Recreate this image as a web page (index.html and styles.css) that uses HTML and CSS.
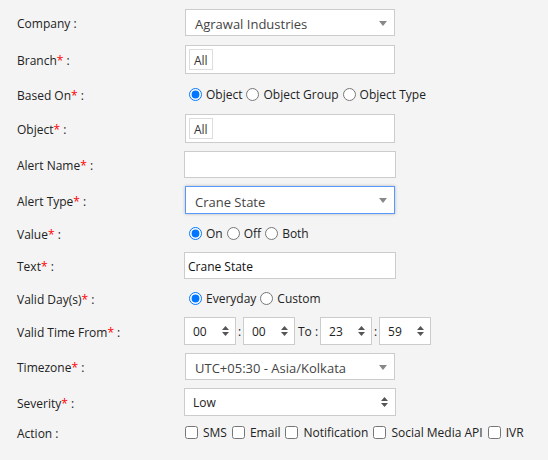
FILE: index.html
```html
<!DOCTYPE html>
<html>
<head>
<meta charset="utf-8">
<link rel="stylesheet" href="styles.css">
</head>
<body>
<div class="form">
  <div class="row r-company">
    <div class="lbl">Company :</div>
    <div class="sel"><span class="val">Agrawal Industries</span><svg class="caret" width="8" height="5" viewBox="0 0 8 5"><path d="M0 0H8L4 5Z" fill="#888"/></svg></div>
  </div>
  <div class="row">
    <div class="lbl">Branch<span class="req">*</span> :</div>
    <div class="multi"><span class="tag">All</span></div>
  </div>
  <div class="row radio-row r-based">
    <div class="lbl">Based On<span class="req">*</span> :</div>
    <div class="opts">
      <label class="opt"><input type="radio" name="b" checked>Object</label>
      <label class="opt"><input type="radio" name="b">Object Group</label>
      <label class="opt"><input type="radio" name="b">Object Type</label>
    </div>
  </div>
  <div class="row">
    <div class="lbl">Object<span class="req">*</span> :</div>
    <div class="multi"><span class="tag">All</span></div>
  </div>
  <div class="row">
    <div class="lbl">Alert Name<span class="req">*</span> :</div>
    <div class="inp"></div>
  </div>
  <div class="row">
    <div class="lbl">Alert Type<span class="req">*</span> :</div>
    <div class="sel focus"><span class="val">Crane State</span><svg class="caret" width="8" height="5" viewBox="0 0 8 5"><path d="M0 0H8L4 5Z" fill="#888"/></svg></div>
  </div>
  <div class="row radio-row">
    <div class="lbl">Value<span class="req">*</span> :</div>
    <div class="opts">
      <label class="opt"><input type="radio" name="v" checked>On</label>
      <label class="opt"><input type="radio" name="v">Off</label>
      <label class="opt"><input type="radio" name="v">Both</label>
    </div>
  </div>
  <div class="row">
    <div class="lbl">Text<span class="req">*</span> :</div>
    <div class="inp">Crane State</div>
  </div>
  <div class="row radio-row">
    <div class="lbl">Valid Day(s)<span class="req">*</span> :</div>
    <div class="opts">
      <label class="opt"><input type="radio" name="d" checked>Everyday</label>
      <label class="opt"><input type="radio" name="d">Custom</label>
    </div>
  </div>
  <div class="row">
    <div class="lbl">Valid Time From<span class="req">*</span> :</div>
    <div class="times">
      <div class="tbox"><span>00</span><svg class="ud" width="7" height="10" viewBox="0 0 7 10"><path d="M0 4H7L3.5 0Z M0 6H7L3.5 10Z" fill="#555"/></svg></div>
      <span class="colon">:</span>
      <div class="tbox"><span>00</span><svg class="ud" width="7" height="10" viewBox="0 0 7 10"><path d="M0 4H7L3.5 0Z M0 6H7L3.5 10Z" fill="#555"/></svg></div>
      <span class="to">To :</span>
      <div class="tbox"><span>23</span><svg class="ud" width="7" height="10" viewBox="0 0 7 10"><path d="M0 4H7L3.5 0Z M0 6H7L3.5 10Z" fill="#555"/></svg></div>
      <span class="colon">:</span>
      <div class="tbox"><span>59</span><svg class="ud" width="7" height="10" viewBox="0 0 7 10"><path d="M0 4H7L3.5 0Z M0 6H7L3.5 10Z" fill="#555"/></svg></div>
    </div>
  </div>
  <div class="row">
    <div class="lbl">Timezone<span class="req">*</span> :</div>
    <div class="sel"><span class="val">UTC+05:30 - Asia/Kolkata</span><svg class="caret" width="8" height="5" viewBox="0 0 8 5"><path d="M0 0H8L4 5Z" fill="#888"/></svg></div>
  </div>
  <div class="row">
    <div class="lbl">Severity<span class="req">*</span> :</div>
    <div class="nsel"><span>Low</span><svg class="ud" width="7" height="10" viewBox="0 0 7 10"><path d="M0 4H7L3.5 0Z M0 6H7L3.5 10Z" fill="#555"/></svg></div>
  </div>
  <div class="row check-row">
    <div class="lbl">Action :</div>
    <div class="opts checks">
      <label class="chk"><input type="checkbox">SMS</label>
      <label class="chk"><input type="checkbox">Email</label>
      <label class="chk"><input type="checkbox">Notification</label>
      <label class="chk"><input type="checkbox">Social Media API</label>
      <label class="chk"><input type="checkbox">IVR</label>
    </div>
  </div>
</div>
</body>
</html>
```

FILE: styles.css
```css
* { box-sizing: border-box; }
html, body { margin: 0; padding: 0; }
body {
  background: #f4f4f4;
  font-family: "Open Sans", "Liberation Sans", sans-serif;
  font-size: 12px;
  color: #222;
  width: 548px;
  height: 460px;
  overflow: hidden;
}
.form {
  padding: 9px 0 0 17px;
  display: flex;
  flex-direction: column;
  gap: 8px;
}
.row {
  display: flex;
  align-items: center;
}
.r-company { margin-bottom: 1px; }
.lbl {
  width: 167px;
  flex: none;
  color: #222;
  padding-top: 2px;
}
.req { color: #f00; }
.sel {
  position: relative;
  width: 210px;
  height: 27px;
  margin-left: 1px;
  background: #fff;
  border: 1px solid #ccc;
  display: flex;
  align-items: center;
  padding-left: 9px;
  padding-top: 3px;
  font-size: 13px;
  color: #444;
}
.sel.focus {
  height: 28px;
  border-color: #5897fb;
  box-shadow: 0 0 3px rgba(0,0,0,0.25);
}
.caret {
  position: absolute;
  right: 7px;
  top: 50%;
  margin-top: -2px;
}
.multi {
  width: 210px;
  height: 29px;
  margin-left: 1px;
  background: #fff;
  border: 1px solid #ccc;
  padding: 3px 3px;
  display: flex;
  align-items: center;
}
.tag {
  border: 1px solid #ddd;
  background: #fff;
  height: 21px;
  padding: 1px 4px 0;
  display: flex;
  align-items: center;
  font-size: 12px;
  color: #333;
}
.inp {
  width: 212px;
  height: 27px;
  background: #fff;
  border: 1px solid #ccc;
  display: flex;
  align-items: center;
  padding-left: 3px;
  padding-top: 2px;
  font-size: 12px;
  color: #111;
}
.radio-row { height: 22px; }
.r-based { height: 24px; }
.opts {
  display: flex;
  align-items: center;
  gap: 4px;
  padding-left: 5px;
}
.opt {
  display: flex;
  align-items: center;
  gap: 4px;
  color: #222;
}
.opt input {
  margin: 0;
  width: 13px;
  height: 13px;
}
.times {
  display: flex;
  align-items: center;
}
.tbox {
  position: relative;
  width: 52px;
  height: 28px;
  background: #fff;
  border: 1px solid #ccc;
  display: flex;
  align-items: center;
  padding-left: 8px;
  font-size: 12px;
  color: #222;
}
.ud {
  position: absolute;
  right: 6px;
  top: 50%;
  margin-top: -5px;
}
.colon {
  width: 7px;
  text-align: center;
}
.to {
  padding: 0 2px 0 3px;
}
.nsel {
  position: relative;
  width: 212px;
  height: 28px;
  background: #fff;
  border: 1px solid #ccc;
  display: flex;
  align-items: center;
  padding-left: 8px;
  font-size: 12px;
  color: #222;
}
.nsel .ud { right: 7px; }
.check-row { height: 16px; }
.checks { padding-left: 1px; gap: 5px; }
.chk {
  display: flex;
  align-items: center;
  gap: 5px;
}
.chk input {
  margin: 0;
  width: 13px;
  height: 13px;
}
```
